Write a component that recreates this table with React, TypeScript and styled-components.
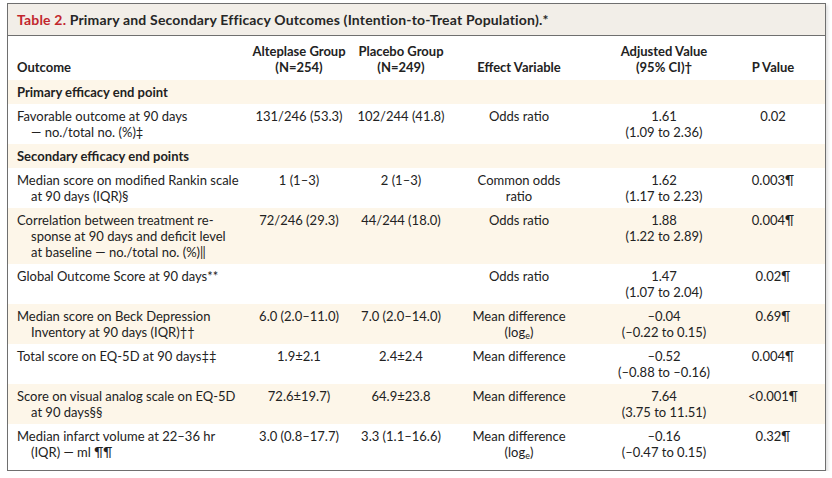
import React from 'react';
import styled, { createGlobalStyle } from 'styled-components';

const GlobalStyle = createGlobalStyle`
  html, body { margin: 0; padding: 0; background: #fff; }
  body {
    font-family: Lato, "Open Sans", sans-serif;
    color: #222222;
  }
`;

const COLS = '241px 100px 104px 132px 158px 60px 1fr';

const Frame = styled.div`
  margin: 3px 0 0 7px;
  width: 817px;
  border: 1px solid #6f6f6f;
  box-shadow: 2px 2px 3px rgba(0, 0, 0, 0.12);
  background: #fff;
`;

const TitleBar = styled.div`
  height: 31px;
  display: flex;
  align-items: center;
  padding-left: 9px;
  background: #f2eee8;
  border-bottom: 1px solid #6f6f6f;
  font-family: Lato, sans-serif;
  font-weight: 700;
  font-size: 14px;
  letter-spacing: 0.18px;
  color: #262626;
  white-space: pre;
`;

const TableNo = styled.span`
  color: #c2262d;
`;

type Tone = 'cream' | 'white';

const Row = styled.div<{ $tone: Tone }>`
  display: grid;
  grid-template-columns: ${COLS};
  align-items: start;
  padding: 4px 0;
  background: ${(p) => (p.$tone === 'cream' ? '#fdf6e9' : '#ffffff')};
  font-size: 13px;
  line-height: 16px;
`;

const HeaderRow = styled(Row)`
  align-items: end;
  padding: 7px 0 5px;
  font-weight: 700;
`;

const SectionRow = styled.div`
  padding: 4px 9px;
  background: #fdf6e9;
  font-weight: 700;
  font-size: 13px;
  line-height: 16px;
`;

const Cell = styled.div`
  text-align: center;
  white-space: nowrap;
`;

const OutcomeCell = styled.div`
  padding-left: 9px;
  white-space: nowrap;
`;

const Line = styled.div`
  display: block;
`;

const WrapLine = styled.div`
  display: block;
  margin-left: 14px;
`;

const Sub = styled.sub`
  font-size: 9px;
  line-height: 0;
  vertical-align: -2px;
`;

const Bottom = styled.div`
  height: 6px;
`;

type DataRow = {
  kind: 'data';
  outcome: string[];
  a: string;
  p: string;
  effect: React.ReactNode[];
  adj: string[];
  pv: string;
};
type Section = { kind: 'section'; label: string };

const loge = (
  <>
    (log<Sub>e</Sub>)
  </>
);

const rows: (DataRow | Section)[] = [
  { kind: 'section', label: 'Primary efficacy end point' },
  {
    kind: 'data',
    outcome: ['Favorable outcome at 90 days', '— no./total no. (%)‡'],
    a: '131/246 (53.3)',
    p: '102/244 (41.8)',
    effect: ['Odds ratio'],
    adj: ['1.61', '(1.09 to 2.36)'],
    pv: '0.02',
  },
  { kind: 'section', label: 'Secondary efficacy end points' },
  {
    kind: 'data',
    outcome: ['Median score on modified Rankin scale', 'at 90 days (IQR)§'],
    a: '1 (1–3)',
    p: '2 (1–3)',
    effect: ['Common odds', 'ratio'],
    adj: ['1.62', '(1.17 to 2.23)'],
    pv: '0.003¶',
  },
  {
    kind: 'data',
    outcome: [
      'Correlation between treatment re-',
      'sponse at 90 days and deficit level',
      'at baseline — no./total no. (%)‖',
    ],
    a: '72/246 (29.3)',
    p: '44/244 (18.0)',
    effect: ['Odds ratio'],
    adj: ['1.88', '(1.22 to 2.89)'],
    pv: '0.004¶',
  },
  {
    kind: 'data',
    outcome: ['Global Outcome Score at 90 days**'],
    a: '',
    p: '',
    effect: ['Odds ratio'],
    adj: ['1.47', '(1.07 to 2.04)'],
    pv: '0.02¶',
  },
  {
    kind: 'data',
    outcome: ['Median score on Beck Depression', 'Inventory at 90 days (IQR)††'],
    a: '6.0 (2.0–11.0)',
    p: '7.0 (2.0–14.0)',
    effect: ['Mean difference', loge],
    adj: ['–0.04', '(–0.22 to 0.15)'],
    pv: '0.69¶',
  },
  {
    kind: 'data',
    outcome: ['Total score on EQ-5D at 90 days‡‡'],
    a: '1.9±2.1',
    p: '2.4±2.4',
    effect: ['Mean difference'],
    adj: ['–0.52', '(–0.88 to –0.16)'],
    pv: '0.004¶',
  },
  {
    kind: 'data',
    outcome: ['Score on visual analog scale on EQ-5D', 'at 90 days§§'],
    a: '72.6±19.7)',
    p: '64.9±23.8',
    effect: ['Mean difference'],
    adj: ['7.64', '(3.75 to 11.51)'],
    pv: '<0.001¶',
  },
  {
    kind: 'data',
    outcome: ['Median infarct volume at 22–36 hr', '(IQR) — ml ¶¶'],
    a: '3.0 (0.8–17.7)',
    p: '3.3 (1.1–16.6)',
    effect: ['Mean difference', loge],
    adj: ['–0.16', '(–0.47 to 0.15)'],
    pv: '0.32¶',
  },
];

export default function App() {
  return (
    <>
      <GlobalStyle />
      <Frame>
        <TitleBar>
          <TableNo>Table 2.</TableNo> Primary and Secondary Efficacy Outcomes (Intention-to-Treat Population).*
        </TitleBar>
        <HeaderRow $tone="white">
          <OutcomeCell>Outcome</OutcomeCell>
          <Cell>
            <Line>Alteplase Group</Line>
            <Line>(N=254)</Line>
          </Cell>
          <Cell>
            <Line>Placebo Group</Line>
            <Line>(N=249)</Line>
          </Cell>
          <Cell>Effect Variable</Cell>
          <Cell>
            <Line>Adjusted Value</Line>
            <Line>(95% CI)†</Line>
          </Cell>
          <Cell>P Value</Cell>
        </HeaderRow>
        {rows.map((r, i) =>
          r.kind === 'section' ? (
            <SectionRow key={i}>{r.label}</SectionRow>
          ) : (
            <Row key={i} $tone={i % 2 === 0 ? 'cream' : 'white'}>
              <OutcomeCell>
                {r.outcome.map((l, j) =>
                  j === 0 ? <Line key={j}>{l}</Line> : <WrapLine key={j}>{l}</WrapLine>
                )}
              </OutcomeCell>
              <Cell>{r.a}</Cell>
              <Cell>{r.p}</Cell>
              <Cell>
                {r.effect.map((l, j) => (
                  <Line key={j}>{l}</Line>
                ))}
              </Cell>
              <Cell>
                {r.adj.map((l, j) => (
                  <Line key={j}>{l}</Line>
                ))}
              </Cell>
              <Cell>{r.pv}</Cell>
            </Row>
          )
        )}
        <Bottom />
      </Frame>
    </>
  );
}
